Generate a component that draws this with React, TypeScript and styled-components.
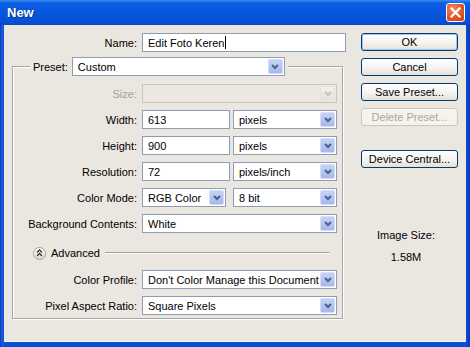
import React from 'react';
import styled, {createGlobalStyle} from 'styled-components';

const GlobalStyle = createGlobalStyle`
  html, body { margin: 0; padding: 0; }
  body {
    width: 470px; height: 347px; overflow: hidden;
    font-family: "Liberation Sans", Arial, sans-serif;
    font-size: 11px; color: #000;
  }
  * { box-sizing: border-box; }
`

const Window = styled.div`
  width: 470px;
  height: 347px;
  display: flex;
  flex-direction: column;
  background: #0b4ed6;
`

const TitleBar = styled.div`
  height: 25px;
  flex: none;
  display: flex;
  align-items: center;
  justify-content: space-between;
  padding: 0 5px 0 7px;
  background: linear-gradient(to bottom, #3a8cf5 0%, #0c5fe4 12%, #0656dd 50%, #0552d8 85%, #0a46c4 100%);
  color: #fff;
  font-weight: bold;
  font-size: 13px;
  text-shadow: 1px 1px 0 #0b2f8a;
`

const CloseButton = styled.div`
  width: 19px;
  height: 19px;
  border: 1px solid #fff;
  border-radius: 3px;
  background: radial-gradient(circle at 35% 30%, #f08a63 0%, #e2552a 55%, #c7401c 100%);
  display: flex;
  align-items: center;
  justify-content: center;
`

const Frame = styled.div`
  flex: 1;
  display: flex;
  padding: 0 4px 5px 4px;
  background: linear-gradient(to right, #0838b0 0, #1660e6 2px, #0b4ed6 4px, #0b4ed6 466px, #0838b0 100%);
`

const Client = styled.div`
  flex: 1;
  display: flex;
  background: #eae7e0;
  border-bottom: 1px solid #f6f5f1;
`

const MainColumn = styled.div`
  width: 350px;
  padding-top: 8px;
  display: flex;
  flex-direction: column;
`

const SideColumn = styled.div`
  width: 97px;
  margin-left: 7px;
  padding-top: 8px;
  display: flex;
  flex-direction: column;
`

const NameRow = styled.div`
  display: grid;
  grid-template-columns: 133px 204px;
  column-gap: 5px;
  height: 19px;
  align-items: center;
`

const Label = styled.span<{$disabled?: boolean}>`
  text-align: right;
  white-space: nowrap;
  color: ${p => p.$disabled ? '#a4a195' : '#000'};
`

const TextField = styled.div<{$w?: number}>`
  width: ${p => p.$w ? `${p.$w}px` : '100%'};
  height: 19px;
  display: flex;
  align-items: center;
  padding-left: 5px;
  background: #fff;
  border: 1px solid #8e9db3;
  white-space: nowrap;
`

const Caret = styled.span`
  display: inline-block;
  width: 1px;
  height: 13px;
  background: #000;
  margin-left: 1px;
`

const GroupBox = styled.fieldset`
  width: 331px;
  margin: 5px 0 0 8px;
  padding: 8px 5px 3px 0;
  min-inline-size: 0;
  border: 1px solid #a9a79f;
  box-shadow: inset 1px 1px 0 #fff, 1px 1px 0 #fff;
`

const Legend = styled.legend`
  margin-left: 17px;
  padding: 0 3px;
  display: flex;
  align-items: center;
  gap: 4px;
  background: #eae7e0;
`

const Rows = styled.div`
  display: flex;
  flex-direction: column;
  gap: 7px;
`

const FormRow = styled.div`
  display: grid;
  grid-template-columns: 124px 195px;
  column-gap: 5px;
  height: 19px;
  align-items: center;
`

const SplitControl = styled.div`
  display: flex;
  justify-content: space-between;
`

const Combo = styled.div<{$w?: number; $disabled?: boolean}>`
  width: ${p => p.$w ? `${p.$w}px` : '100%'};
  height: 19px;
  display: flex;
  align-items: center;
  padding: 1px;
  background: ${p => p.$disabled ? '#ebe8e1' : '#fff'};
  border: 1px solid ${p => p.$disabled ? '#c8c5bb' : '#8e9db3'};
`

const ComboText = styled.span`
  flex: 1;
  padding-left: 4px;
  white-space: nowrap;
  overflow: hidden;
`

const ArrowButton = styled.span<{$disabled?: boolean}>`
  width: 15px;
  height: 15px;
  flex: none;
  border-radius: 2px;
  display: flex;
  align-items: center;
  justify-content: center;
  border: 1px solid ${p => p.$disabled ? '#e4e2da' : '#d3dcf6'};
  background: ${p => p.$disabled
    ? 'linear-gradient(to bottom, #f2f1ec, #e4e2db)'
    : 'linear-gradient(to bottom, #c6d3f8, #a5b8ed)'};
`

const AdvancedRow = styled.div`
  height: 14px;
  margin: 13px 0 10px;
  padding-left: 20px;
  display: flex;
  align-items: center;
  gap: 5px;
`

const RoundToggle = styled.span`
  width: 13px;
  height: 13px;
  flex: none;
  border-radius: 50%;
  border: 1px solid #a3a198;
  background: linear-gradient(to bottom, #ffffff, #dcdad2);
  display: flex;
  align-items: center;
  justify-content: center;
`

const Rule = styled.div`
  width: 225px;
  height: 2px;
  flex: none;
  background: linear-gradient(to bottom, #a09e96 0, #a09e96 1px, #fff 1px, #fff 2px);
`

const Button = styled.div<{$default?: boolean; $disabled?: boolean}>`
  height: 18px;
  display: flex;
  align-items: center;
  justify-content: center;
  border: 1px solid ${p => p.$disabled ? '#c9c7ba' : '#003c74'};
  border-radius: 3px;
  color: ${p => p.$disabled ? '#aca899' : '#000'};
  background: ${p => p.$disabled
    ? '#f4f3ee'
    : 'linear-gradient(to bottom, #ffffff 0%, #f3f2ee 60%, #e3e0d6 100%)'};
  box-shadow: ${p => p.$default ? 'inset 0 0 0 1px #a8c2ee' : 'none'};
  white-space: nowrap;
`

const ButtonStack = styled.div`
  display: flex;
  flex-direction: column;
  gap: 7px;
`

const ImageInfo = styled.div`
  width: 90px;
  margin-top: 61px;
  display: flex;
  flex-direction: column;
  gap: 10px;
  text-align: center;
  line-height: 12px;
`

const Chevron = ({disabled}: {disabled?: boolean}) => (
  <svg width="8" height="6" viewBox="0 0 8 6">
    <polyline points="1,1 4,4 7,1" fill="none" stroke={disabled ? '#c5c3ba' : '#4d6185'}
              strokeWidth="2"/>
  </svg>
)

type DropProps = {value: string, w?: number, disabled?: boolean}
const Dropdown = ({value, w, disabled}: DropProps) => (
  <Combo $w={w} $disabled={disabled}>
    <ComboText>{value}</ComboText>
    <ArrowButton $disabled={disabled}><Chevron disabled={disabled}/></ArrowButton>
  </Combo>
)

const App = () => {
  return (
    <>
      <GlobalStyle/>
      <Window>
        <TitleBar>
          <span>New</span>
          <CloseButton>
            <svg width="11" height="11" viewBox="0 0 11 11">
              <path d="M1.5 1.5 L9.5 9.5 M9.5 1.5 L1.5 9.5" stroke="#fff" strokeWidth="2.2"
                    strokeLinecap="square"/>
            </svg>
          </CloseButton>
        </TitleBar>
        <Frame>
          <Client>
            <MainColumn>
              <NameRow>
                <Label>Name:</Label>
                <TextField>Edit Foto Keren<Caret/></TextField>
              </NameRow>
              <GroupBox>
                <Legend>
                  <span>Preset:</span>
                  <Dropdown value="Custom" w={213}/>
                </Legend>
                <Rows>
                  <FormRow>
                    <Label $disabled>Size:</Label>
                    <Dropdown value="" disabled/>
                  </FormRow>
                  <FormRow>
                    <Label>Width:</Label>
                    <SplitControl>
                      <TextField $w={88}>613</TextField>
                      <Dropdown value="pixels" w={104}/>
                    </SplitControl>
                  </FormRow>
                  <FormRow>
                    <Label>Height:</Label>
                    <SplitControl>
                      <TextField $w={88}>900</TextField>
                      <Dropdown value="pixels" w={104}/>
                    </SplitControl>
                  </FormRow>
                  <FormRow>
                    <Label>Resolution:</Label>
                    <SplitControl>
                      <TextField $w={88}>72</TextField>
                      <Dropdown value="pixels/inch" w={104}/>
                    </SplitControl>
                  </FormRow>
                  <FormRow>
                    <Label>Color Mode:</Label>
                    <SplitControl>
                      <Dropdown value="RGB Color" w={84}/>
                      <Dropdown value="8 bit" w={104}/>
                    </SplitControl>
                  </FormRow>
                  <FormRow>
                    <Label>Background Contents:</Label>
                    <Dropdown value="White"/>
                  </FormRow>
                </Rows>
                <AdvancedRow>
                  <RoundToggle>
                    <svg width="7" height="8" viewBox="0 0 7 8">
                      <polyline points="1,3.5 3.5,1 6,3.5" fill="none" stroke="#333" strokeWidth="1.3"/>
                      <polyline points="1,7 3.5,4.5 6,7" fill="none" stroke="#333" strokeWidth="1.3"/>
                    </svg>
                  </RoundToggle>
                  <span>Advanced</span>
                  <Rule/>
                </AdvancedRow>
                <Rows>
                  <FormRow>
                    <Label>Color Profile:</Label>
                    <Dropdown value="Don't Color Manage this Document"/>
                  </FormRow>
                  <FormRow>
                    <Label>Pixel Aspect Ratio:</Label>
                    <Dropdown value="Square Pixels"/>
                  </FormRow>
                </Rows>
              </GroupBox>
            </MainColumn>
            <SideColumn>
              <ButtonStack>
                <Button $default>OK</Button>
                <Button>Cancel</Button>
                <Button>Save Preset...</Button>
                <Button $disabled>Delete Preset...</Button>
                <Button style={{marginTop: 17}}>Device Central...</Button>
              </ButtonStack>
              <ImageInfo>
                <span>Image Size:</span>
                <span>1.58M</span>
              </ImageInfo>
            </SideColumn>
          </Client>
        </Frame>
      </Window>
    </>
  );
};

export default App;
